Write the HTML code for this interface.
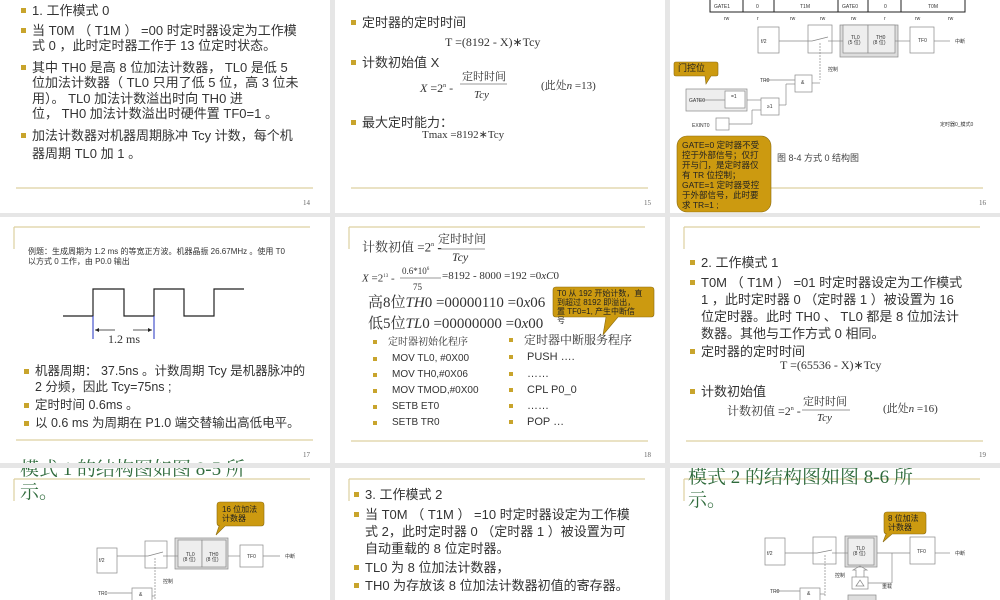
<!DOCTYPE html>
<html><head><meta charset="utf-8">
<style>
*{margin:0;padding:0;box-sizing:border-box}
body{width:1000px;height:600px;overflow:hidden;background:#e6e6e6;position:relative;font-family:"Liberation Sans","Noto Sans CJK SC",sans-serif;color:#333}
.s{position:absolute;background:#fff;overflow:hidden}
.t{position:absolute;white-space:nowrap;font-size:13px;line-height:15px}
.b::before{content:"";position:absolute;left:-11px;top:5px;width:5px;height:5px;background:#c8a42c}
.sm{font-size:10px;line-height:12px}
.sf{font-family:"Liberation Serif","Noto Serif CJK SC",serif}
.pn{position:absolute;font-family:"Liberation Serif",serif;font-size:7px;color:#666}
.g{position:absolute;white-space:nowrap;font-family:"Liberation Serif","Noto Serif CJK SC",serif;font-size:19px;color:#2f6b3c;line-height:22px}
.cl{position:absolute;font-size:8px;line-height:9px;color:#222;white-space:nowrap}
.bq{position:absolute;width:5px;height:5px;background:#c8a42c}
.gap{position:absolute;background:#e6e6e6}
</style></head><body>
<div class="s" style="left:0;top:0;width:330px;height:213px"></div>
<div class="s" style="left:335px;top:0;width:330px;height:213px"></div>
<div class="s" style="left:670px;top:0;width:330px;height:213px"></div>
<div class="s" style="left:0;top:217px;width:330px;height:246px"></div>
<div class="s" style="left:335px;top:217px;width:330px;height:246px"></div>
<div class="s" style="left:670px;top:217px;width:330px;height:246px"></div>
<div class="s" style="left:0;top:468px;width:330px;height:132px"></div>
<div class="s" style="left:335px;top:468px;width:330px;height:132px"></div>
<div class="s" style="left:670px;top:468px;width:330px;height:132px"></div>

<svg style="position:absolute;left:0;top:0" width="1000" height="600" viewBox="0 0 1000 600">
<g stroke="#ddd0a0" stroke-width="1.2" fill="none">
<line x1="16" y1="188" x2="313" y2="188"/>
<line x1="351" y1="188" x2="648" y2="188"/>
<line x1="771" y1="188" x2="983" y2="188"/>
<line x1="14" y1="227" x2="310" y2="227"/><line x1="14" y1="227" x2="14" y2="249"/>
<line x1="16" y1="440" x2="313" y2="440"/>
<line x1="349" y1="227" x2="645" y2="227"/><line x1="349" y1="227" x2="349" y2="249"/>
<line x1="351" y1="441" x2="648" y2="441"/>
<line x1="684" y1="227" x2="980" y2="227"/><line x1="684" y1="227" x2="684" y2="249"/>
<line x1="686" y1="441" x2="983" y2="441"/>
<line x1="14" y1="479" x2="310" y2="479"/><line x1="14" y1="479" x2="14" y2="501"/>
<line x1="349" y1="479" x2="645" y2="479"/><line x1="349" y1="479" x2="349" y2="501"/>
<line x1="684" y1="479" x2="980" y2="479"/><line x1="684" y1="479" x2="684" y2="501"/>
</g>
<g stroke="#222" stroke-width="1" fill="none">
<rect x="710" y="-2" width="255" height="14"/>
<line x1="743" y1="0" x2="743" y2="12"/><line x1="774" y1="0" x2="774" y2="12"/><line x1="838" y1="0" x2="838" y2="12"/><line x1="868" y1="0" x2="868" y2="12"/><line x1="901" y1="0" x2="901" y2="12"/>
</g>
<g font-size="5" fill="#333" font-family="Liberation Sans">
<text x="714" y="8">GATE1</text><text x="756" y="8">0</text><text x="800" y="8">T1M</text><text x="842" y="8">GATE0</text><text x="884" y="8">0</text><text x="928" y="8">T0M</text>
<text x="724" y="20">rw</text><text x="757" y="20">r</text><text x="790" y="20">rw</text><text x="820" y="20">rw</text><text x="851" y="20">rw</text><text x="884" y="20">r</text><text x="915" y="20">rw</text><text x="948" y="20">rw</text>
</g>
<g stroke="#888" stroke-width="0.7" fill="none">
<rect x="758" y="27" width="21" height="26" fill="#fff"/>
<rect x="808" y="25" width="24" height="28"/>
<rect x="840" y="25" width="58" height="32" fill="#ddd"/>
<rect x="843" y="25" width="25" height="28" fill="#eee"/><rect x="868" y="25" width="27" height="28" fill="#eee"/>
<rect x="910" y="27" width="24" height="26"/>
<line x1="779" y1="41" x2="812" y2="41"/><line x1="812" y1="41" x2="828" y2="37"/><line x1="828" y1="41" x2="843" y2="41"/>
<line x1="895" y1="41" x2="910" y2="41"/><line x1="934" y1="41" x2="950" y2="41"/>
<line x1="820" y1="43" x2="820" y2="80" stroke-dasharray="2,1"/>
<rect x="686" y="89" width="61" height="22" fill="#eee"/><rect x="725" y="91" width="20" height="17" fill="#fff"/>
<rect x="795" y="75" width="17" height="17"/><rect x="761" y="98" width="18" height="17"/>
<line x1="765" y1="80" x2="795" y2="80"/><line x1="812" y1="83" x2="820" y2="83"/>
<line x1="786" y1="84" x2="795" y2="84"/><line x1="786" y1="84" x2="786" y2="105"/><line x1="779" y1="105" x2="786" y2="105"/>
<line x1="747" y1="100" x2="761" y2="100"/><line x1="698" y1="100" x2="725" y2="100"/>
<line x1="729" y1="124" x2="752" y2="124"/><line x1="752" y1="124" x2="752" y2="110"/><line x1="752" y1="110" x2="761" y2="110"/>
<rect x="716" y="118" width="13" height="12"/>
</g>
<g font-size="5" fill="#333" font-family="Liberation Sans,Noto Sans CJK SC">
<text x="761" y="43">f/2</text><text x="851" y="39">TL0</text><text x="848" y="44">(5 位)</text><text x="876" y="39">TH0</text><text x="873" y="44">(8 位)</text>
<text x="918" y="42">TF0</text><text x="955" y="43">中断</text><text x="828" y="71">控制</text><text x="760" y="82">TR0</text><text x="801" y="84">&amp;</text>
<text x="689" y="102">GATE0</text><text x="731" y="98">=1</text><text x="767" y="108">≥1</text><text x="692" y="127">EXINT0</text><text x="940" y="126">定时器0_模式0</text>
</g>
<path d="M676 62 H716 Q718 62 718 64 V74 Q718 76 716 76 H711 L706 84 L705 76 H676 Q674 76 674 74 V64 Q674 62 676 62Z" fill="#cc9a10" stroke="#8a6a10" stroke-width="0.6"/>
<rect x="677" y="136" width="94" height="76" rx="10" fill="#cc9a10" stroke="#8a6a10" stroke-width="0.6"/>
<polyline points="63,316 93,316 93,289 124,289 124,316 154,316 154,289 184,289 184,316 214,316 214,289 244,289" fill="none" stroke="#222" stroke-width="1.2"/>
<line x1="93" y1="316" x2="93" y2="339" stroke="#2030c0" stroke-width="1"/><line x1="154" y1="316" x2="154" y2="339" stroke="#2030c0" stroke-width="1"/>
<g stroke="#222" stroke-width="0.8"><line x1="95" y1="330" x2="115" y2="330"/><line x1="133" y1="330" x2="152" y2="330"/></g>
<path d="M95 330 l4 -2 v4z M152 330 l-4 -2 v4z" fill="#222"/>
<path d="M556 287 H651 Q654 287 654 290 V314 Q654 317 651 317 H618 L603 335 L606 317 H556 Q553 317 553 314 V290 Q553 287 556 287Z" fill="#cc9a10" stroke="#8a6a10" stroke-width="0.6"/>
<g stroke="#333" stroke-width="0.6"><line x1="438" y1="249" x2="485" y2="249"/><line x1="400" y1="278" x2="441" y2="278"/><line x1="460" y1="84" x2="507" y2="84"/><line x1="802" y1="410" x2="850" y2="410"/></g>
<path d="M220 502 H261 Q264 502 264 505 V523 Q264 526 261 526 H225 L216 535 L219 526 H220 Q217 526 217 523 V505 Q217 502 220 502Z" fill="#cc9a10" stroke="#8a6a10" stroke-width="0.6"/>
<g stroke="#888" stroke-width="0.7" fill="none">
<rect x="97" y="548" width="20" height="25"/><rect x="145" y="541" width="22" height="27"/>
<rect x="175" y="538" width="53" height="31" fill="#ddd"/><rect x="178" y="540" width="24" height="27" fill="#eee"/><rect x="202" y="540" width="24" height="27" fill="#eee"/>
<rect x="240" y="545" width="23" height="22"/>
<line x1="117" y1="556" x2="148" y2="556"/><line x1="148" y1="556" x2="163" y2="552"/><line x1="163" y1="556" x2="178" y2="556"/>
<line x1="228" y1="556" x2="240" y2="556"/><line x1="263" y1="556" x2="280" y2="556"/>
<line x1="155" y1="558" x2="155" y2="600" stroke-dasharray="2,1"/>
<rect x="132" y="588" width="20" height="16"/><line x1="108" y1="593" x2="132" y2="593"/>
<line x1="152" y1="596" x2="155" y2="596"/>
</g>
<g font-size="5" fill="#333" font-family="Liberation Sans,Noto Sans CJK SC">
<text x="99" y="562">f/2</text><text x="186" y="556">TL0</text><text x="183" y="561">(8 位)</text><text x="209" y="556">TH0</text><text x="206" y="561">(8 位)</text>
<text x="247" y="558">TF0</text><text x="285" y="558">中断</text><text x="163" y="583">控制</text><text x="98" y="595">TR0</text><text x="139" y="596">&amp;</text>
</g>
<path d="M887 512 H923 Q926 512 926 515 V531 Q926 534 923 534 H892 L883 542 L886 534 H887 Q884 534 884 531 V515 Q884 512 887 512Z" fill="#cc9a10" stroke="#8a6a10" stroke-width="0.6"/>
<g stroke="#888" stroke-width="0.7" fill="none">
<rect x="765" y="538" width="20" height="27"/><rect x="813" y="537" width="23" height="27"/>
<rect x="845" y="536" width="32" height="31" fill="#ddd"/><rect x="848" y="538" width="26" height="27" fill="#eee"/>
<rect x="910" y="537" width="25" height="27"/>
<line x1="785" y1="553" x2="817" y2="553"/><line x1="817" y1="553" x2="832" y2="550"/><line x1="832" y1="553" x2="848" y2="553"/>
<line x1="877" y1="553" x2="910" y2="553"/><line x1="935" y1="553" x2="950" y2="553"/>
<line x1="892" y1="553" x2="892" y2="583"/><line x1="892" y1="583" x2="868" y2="583"/>
<rect x="852" y="577" width="16" height="12"/><path d="M856 586 L860 580 L864 586Z"/>
<path d="M856 577 V570 H853 L860 566 L867 570 H864 V577"/>
<line x1="825" y1="555" x2="825" y2="596" stroke-dasharray="2,1"/>
<rect x="800" y="588" width="20" height="14"/><line x1="776" y1="591" x2="800" y2="591"/><line x1="820" y1="594" x2="825" y2="594"/>
<rect x="848" y="595" width="28" height="8" fill="#ddd"/>
</g>
<g font-size="5" fill="#333" font-family="Liberation Sans,Noto Sans CJK SC">
<text x="767" y="555">f/2</text><text x="856" y="550">TL0</text><text x="853" y="555">(8 位)</text><text x="917" y="553">TF0</text><text x="955" y="555">中断</text>
<text x="835" y="577">控制</text><text x="882" y="588">重载</text><text x="770" y="593">TR0</text><text x="807" y="595">&amp;</text>
</g>
</svg>

<!-- slide 14 -->
<div class="t b" style="left:32px;top:3px">1. 工作模式 0</div>
<div class="t b" style="left:32px;top:23px">当 T0M （ T1M ） =00 时定时器设定为工作模</div>
<div class="t" style="left:32px;top:38px">式 0 ，此时定时器工作于 13 位定时状态。</div>
<div class="t b" style="left:32px;top:60px">其中 TH0 是高 8 位加法计数器， TL0 是低 5</div>
<div class="t" style="left:32px;top:75px">位加法计数器（ TL0 只用了低 5 位，高 3 位未</div>
<div class="t" style="left:32px;top:91px">用）。 TL0 加法计数溢出时向 TH0 进</div>
<div class="t" style="left:32px;top:106px">位， TH0 加法计数溢出时硬件置 TF0=1 。</div>
<div class="t b" style="left:32px;top:128px">加法计数器对机器周期脉冲 Tcy 计数，每个机</div>
<div class="t" style="left:32px;top:146px">器周期 TL0 加 1 。</div>
<div class="pn" style="left:303px;top:199px">14</div>

<!-- slide 15 -->
<div class="t b" style="left:362px;top:15px">定时器的定时时间</div>
<div class="t sf" style="left:445px;top:35px;font-size:12px">T =(8192 - X)∗Tcy</div>
<div class="t b" style="left:362px;top:55px">计数初始值 X</div>
<div class="t sf" style="left:420px;top:79px;font-size:12px"><i>X</i> =2<sup style="font-size:6px">n</sup> -</div>
<div class="t sf" style="left:462px;top:70px;font-size:11px">定时时间</div>
<div class="t sf" style="left:474px;top:88px;font-size:11px"><i>Tcy</i></div>
<div class="t sf" style="left:541px;top:79px;font-size:11px">(此处<i>n</i> =13)</div>
<div class="t b" style="left:362px;top:115px">最大定时能力：</div>
<div class="t sf" style="left:422px;top:128px;font-size:11px">Tmax =8192∗Tcy</div>
<div class="pn" style="left:644px;top:199px">15</div>

<!-- slide 16 -->
<div class="cl" style="left:678px;top:64px;font-size:9px">门控位</div>
<div class="cl" style="left:682px;top:140px;line-height:10px;font-size:8.5px">GATE=0 定时器不受<br>控于外部信号；仅打<br>开与门，是定时器仅<br>有 TR 位控制；<br>GATE=1 定时器受控<br>于外部信号，此时要<br>求 TR=1 ;</div>
<div class="t" style="left:777px;top:151px;font-size:9px;color:#444">图 8-4 方式 0 结构图</div>
<div class="pn" style="left:979px;top:199px">16</div>

<!-- slide 17 -->
<div class="t" style="left:28px;top:247px;font-size:8px;line-height:10px">例题：生成周期为 1.2 ms 的等宽正方波。机器晶振 26.67MHz 。使用 T0<br>以方式 0 工作，由 P0.0 输出</div>
<div class="t sf" style="left:108px;top:332px;font-size:12px">1.2 ms</div>
<div class="t b" style="left:35px;top:364px;font-size:12.5px">机器周期： 37.5ns 。计数周期 Tcy 是机器脉冲的</div>
<div class="t" style="left:35px;top:380px;font-size:12.5px">2 分频，因此 Tcy=75ns ;</div>
<div class="t b" style="left:35px;top:398px;font-size:12.5px">定时时间 0.6ms 。</div>
<div class="t b" style="left:35px;top:416px;font-size:12.5px">以 0.6 ms 为周期在 P1.0 端交替输出高低电平。</div>
<div class="pn" style="left:303px;top:451px">17</div>

<!-- slide 18 -->
<div class="t sf" style="left:362px;top:238px;font-size:13px">计数初值 =2<sup style="font-size:6px">n</sup> -</div>
<div class="t sf" style="left:438px;top:232px;font-size:12px">定时时间</div>
<div class="t sf" style="left:452px;top:250px;font-size:12px"><i>Tcy</i></div>
<div class="t sf" style="left:362px;top:269px;font-size:11px"><i>X</i> =2<sup style="font-size:5px">13</sup> -</div>
<div class="t sf" style="left:402px;top:262px;font-size:9px">0.6*10<sup style="font-size:5px">6</sup></div>
<div class="t sf" style="left:413px;top:280px;font-size:9px">75</div>
<div class="t sf" style="left:442px;top:269px;font-size:11px">=8192 - 8000 =192 =0<i>xC</i>0</div>
<div class="t sf" style="left:368px;top:294px;font-size:15px;line-height:18px">高8位<i>TH</i>0 =00000110 =0<i>x</i>06</div>
<div class="t sf" style="left:368px;top:315px;font-size:15px;line-height:18px">低5位<i>TL</i>0 =00000000 =0<i>x</i>00</div>
<div class="cl" style="left:557px;top:289px">T0 从 192 开始计数，直<br>到超过 8192 即溢出，<br>置 TF0=1, 产生中断信<br>号</div>
<div class="bq" style="left:373px;top:340px;width:4px;height:4px"></div>
<div class="bq" style="left:373px;top:357px;width:4px;height:4px"></div>
<div class="bq" style="left:373px;top:373px;width:4px;height:4px"></div>
<div class="bq" style="left:373px;top:389px;width:4px;height:4px"></div>
<div class="bq" style="left:373px;top:405px;width:4px;height:4px"></div>
<div class="bq" style="left:373px;top:421px;width:4px;height:4px"></div>
<div class="t sf" style="left:388px;top:335px;font-size:10px">定时器初始化程序</div>
<div class="t sm" style="left:392px;top:353px">MOV TL0, #0X00</div>
<div class="t sm" style="left:392px;top:369px">MOV TH0,#0X06</div>
<div class="t sm" style="left:392px;top:385px">MOV TMOD,#0X00</div>
<div class="t sm" style="left:392px;top:401px">SETB ET0</div>
<div class="t sm" style="left:392px;top:417px">SETB TR0</div>
<div class="bq" style="left:509px;top:338px;width:4px;height:4px"></div>
<div class="bq" style="left:509px;top:355px;width:4px;height:4px"></div>
<div class="bq" style="left:509px;top:372px;width:4px;height:4px"></div>
<div class="bq" style="left:509px;top:388px;width:4px;height:4px"></div>
<div class="bq" style="left:509px;top:404px;width:4px;height:4px"></div>
<div class="bq" style="left:509px;top:420px;width:4px;height:4px"></div>
<div class="t sf" style="left:524px;top:333px;font-size:12px">定时器中断服务程序</div>
<div class="t" style="left:527px;top:350px;font-size:11px">PUSH ….</div>
<div class="t" style="left:527px;top:367px;font-size:11px">……</div>
<div class="t" style="left:527px;top:383px;font-size:11px">CPL P0_0</div>
<div class="t" style="left:527px;top:399px;font-size:11px">……</div>
<div class="t" style="left:527px;top:415px;font-size:11px">POP …</div>
<div class="pn" style="left:644px;top:451px">18</div>

<!-- slide 19 -->
<div class="t b" style="left:701px;top:255px">2. 工作模式 1</div>
<div class="t b" style="left:701px;top:275px">T0M （ T1M ） =01 时定时器设定为工作模式</div>
<div class="t" style="left:701px;top:292px">1 ，此时定时器 0 （定时器 1 ）被设置为 16</div>
<div class="t" style="left:701px;top:309px">位定时器。此时 TH0 、 TL0 都是 8 位加法计</div>
<div class="t" style="left:701px;top:326px">数器。其他与工作方式 0 相同。</div>
<div class="t b" style="left:701px;top:344px">定时器的定时时间</div>
<div class="t sf" style="left:780px;top:358px;font-size:12px">T =(65536 - X)∗Tcy</div>
<div class="t b" style="left:701px;top:384px">计数初始值</div>
<div class="t sf" style="left:727px;top:402px;font-size:12px">计数初值 =2<sup style="font-size:6px">n</sup> -</div>
<div class="t sf" style="left:803px;top:395px;font-size:11px">定时时间</div>
<div class="t sf" style="left:817px;top:411px;font-size:11px"><i>Tcy</i></div>
<div class="t sf" style="left:883px;top:402px;font-size:11px">(此处<i>n</i> =16)</div>
<div class="pn" style="left:979px;top:451px">19</div>

<!-- slide 20 -->
<div class="g" style="left:20px;top:459px">模式 1 的结构图如图 8-5 所</div>
<div class="g" style="left:20px;top:482px">示。</div>
<div class="cl" style="left:222px;top:505px;font-size:8px">16 位加法<br>计数器</div>

<!-- slide 21 -->
<div class="t b" style="left:365px;top:487px">3. 工作模式 2</div>
<div class="t b" style="left:365px;top:507px">当 T0M （ T1M ） =10 时定时器设定为工作模</div>
<div class="t" style="left:365px;top:524px">式 2，此时定时器 0 （定时器 1 ）被设置为可</div>
<div class="t" style="left:365px;top:541px">自动重载的 8 位定时器。</div>
<div class="t b" style="left:365px;top:560px">TL0 为 8 位加法计数器，</div>
<div class="t b" style="left:365px;top:578px">TH0 为存放该 8 位加法计数器初值的寄存器。</div>

<!-- slide 22 -->
<div class="g" style="left:688px;top:467px">模式 2 的结构图如图 8-6 所</div>
<div class="g" style="left:688px;top:490px">示。</div>
<div class="cl" style="left:888px;top:514px;font-size:8px">8 位加法<br>计数器</div>

<div class="gap" style="left:0;top:463px;width:1000px;height:5px"></div>
<div class="gap" style="left:0;top:213px;width:1000px;height:4px"></div>
<div class="gap" style="left:330px;top:0;width:5px;height:600px"></div>
<div class="gap" style="left:665px;top:0;width:5px;height:600px"></div>
</body></html>
